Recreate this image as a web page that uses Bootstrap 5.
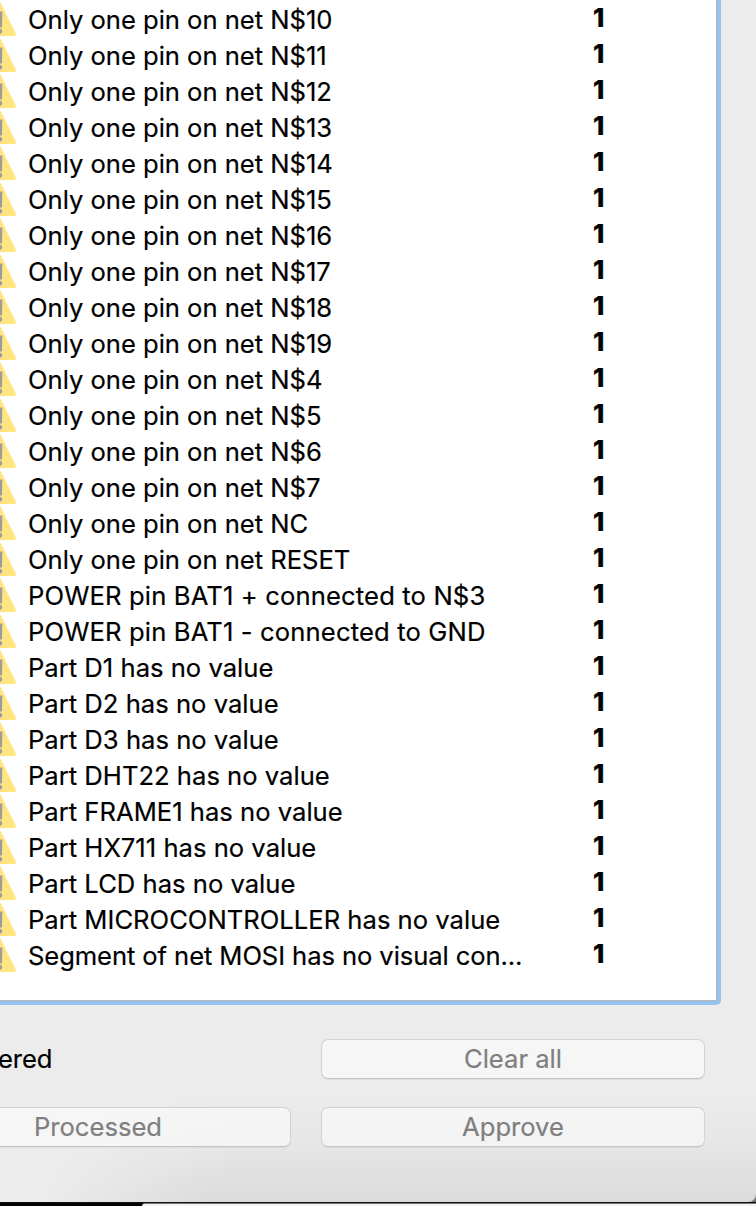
<!DOCTYPE html>
<html lang="en">
<head>
<meta charset="utf-8">
<title>ERC Errors</title>
<link href="https://cdn.jsdelivr.net/npm/bootstrap@5.3.0/dist/css/bootstrap.min.css" rel="stylesheet">
<style>
html, body { height: 1206px; overflow: hidden; }
body { background: #000; font-family: Inter, "Liberation Sans", sans-serif; font-size: 25.6px; color: #000; letter-spacing: -.09px; -webkit-text-stroke: .2px; }
.backdrop { height: 3px; margin-left: 142px; background: #f4f2f2; border-top: 1px solid #777; border-top-left-radius: 4px; }
.window { height: 1202px; background: #ececec; border-bottom-right-radius: 8px; }
.behind { background: linear-gradient(90deg, #000 0 700px, #777 750px); border-bottom: 1px solid #111; }
.shade { left: 0; right: 0; bottom: 0; height: 110px; background: linear-gradient(180deg, rgba(0,0,0,0) 0, rgba(0,0,0,.025) 50%, rgba(0,0,0,.07) 100%); -webkit-mask-image: linear-gradient(115deg, transparent 80px, #000 240px); mask-image: linear-gradient(115deg, transparent 80px, #000 240px); border-bottom-right-radius: 8px; }
.issues { width: 721px; height: 1005px; background: #fff; border: solid #97c1ef; border-width: 0 4px 4px 0; border-bottom-right-radius: 5px; }
.issues-inner { height: 1001px; border: solid #b4b6b4; border-width: 0 1px 1px 0; padding-top: 2px; }
.issue { height: 36px; line-height: 36px; white-space: nowrap; }
.issue svg { width: 34px; height: 34px; margin-left: -18px; margin-right: 12px; flex: none; }
.issue span { width: 565px; }
.net-name span { letter-spacing: -.02px; }
.power-pin span { letter-spacing: .14px; }
.part-name span { letter-spacing: .01px; }
.issue b { font-weight: 800; position: relative; top: -2px; }
.status { width: 321px; line-height: 40px; margin-left: -2px; }
.push { height: 40px; line-height: 38px; padding: 0; font-size: inherit; letter-spacing: 0; color: #7f7f7f; background: rgba(255,255,255,.52); border: 1px solid #d3d3d3; border-bottom-color: #c4c4c4; border-radius: 7px; box-shadow: 0 1px 1px rgba(0,0,0,.06); width: 384px; }
.nudge { position: relative; left: -1px; }
</style>
</head>
<body>
<svg class="d-none"><symbol id="warn" viewBox="0 0 34 34"><path d="M17 1 L32.500 32.500 H1.500 Z" fill="#ffe581" stroke="#ffe581" stroke-width="3" stroke-linejoin="round"/><path d="M14 9.500 H20.300 L20 25.500 H14.800 Z" fill="#9d9d9d"/><circle cx="17.600" cy="29.300" r="2.600" fill="#9d9d9d"/></symbol></svg>
<div class="behind">
<main class="window position-relative">
<section class="issues"><div class="issues-inner" id="list"></div></section>
<div class="shade position-absolute"></div>
<div class="position-relative d-flex" style="padding-top:34px"><div class="status">ered</div><button class="btn push ms-auto" style="margin-right:51px">Clear all</button></div>
<div class="position-relative d-flex" style="padding-top:28px"><button class="btn push" style="margin-left:-93px"><span class="nudge">Processed</span></button><button class="btn push ms-auto" style="margin-right:51px">Approve</button></div>
</main>
</div>
<div class="backdrop"></div>
<script>
const net = ["N$10","N$11","N$12","N$13","N$14","N$15","N$16","N$17","N$18","N$19","N$4","N$5","N$6","N$7","NC","RESET"].map(n => ["net-name", "Only one pin on net " + n]);
const power = ["POWER pin BAT1 + connected to N$3", "POWER pin BAT1 - connected to GND"].map(t => ["power-pin", t]);
const parts = ["D1","D2","D3","DHT22","FRAME1","HX711","LCD","MICROCONTROLLER"].map(p => ["part-name", "Part " + p + " has no value"]);
document.getElementById("list").innerHTML = [...net, ...power, ...parts, ["segment", "Segment of net MOSI has no visual con..."]].map(([kind, t]) =>
  `<div class="issue ${kind} d-flex"><svg><use href="#warn"/></svg><span>${t}</span><b>1</b></div>`).join("");
</script>
<script src="https://cdn.jsdelivr.net/npm/bootstrap@5.3.0/dist/js/bootstrap.bundle.min.js"></script>
</body>
</html>
